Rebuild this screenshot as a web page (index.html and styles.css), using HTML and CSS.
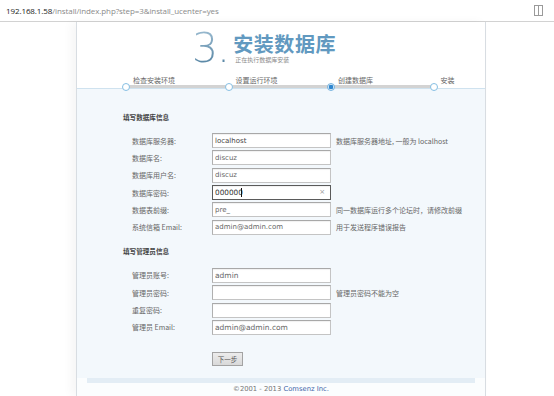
FILE: index.html
```html
<!DOCTYPE html>
<html lang="zh-CN">
<head>
<meta charset="utf-8">
<title>Discuz! 安装向导</title>
<link rel="stylesheet" href="styles.css">
</head>
<body>
<div class="addr">
  <span class="host">192.168.1.58</span><span class="path">/install/index.php?step=3&amp;install_ucenter=yes</span>
  <svg class="reader" width="9" height="11" viewBox="0 0 9 11"><rect x="0.5" y="0.5" width="8" height="10" fill="none" stroke="#9a9a9a"/><line x1="4.5" y1="0.5" x2="4.5" y2="10.5" stroke="#9a9a9a"/></svg>
</div>
<div class="page">
  <div class="header">
    <div class="hero">
      <span class="num">3.</span>
      <div class="titles">
        <div class="title">安装数据库</div>
        <div class="subtitle">正在执行数据库安装</div>
      </div>
    </div>
    <div class="steps">
      <div class="step"><span class="dot"></span><span class="slabel">检查安装环境</span></div>
      <div class="step"><span class="dot"></span><span class="slabel">设置运行环境</span></div>
      <div class="step"><span class="dot active"></span><span class="slabel">创建数据库</span></div>
      <div class="step last"><span class="dot"></span><span class="slabel">安装</span></div>
    </div>
  </div>
  <div class="main">
    <div class="sect">填写数据库信息</div>
    <div class="rows">
      <label>数据库服务器:</label><input class="txt dark" value="localhost"><span class="hint">数据库服务器地址, 一般为 localhost</span>
      <label>数据库名:</label><input class="txt" value="discuz"><span class="hint"></span>
      <label>数据库用户名:</label><input class="txt" value="discuz"><span class="hint"></span>
      <label>数据库密码:</label><span class="field"><input class="txt focus" value="000000"><span class="caret"></span><span class="clear">×</span></span><span class="hint"></span>
      <label>数据表前缀:</label><input class="txt" value="pre_"><span class="hint">同一数据库运行多个论坛时，请修改前缀</span>
      <label>系统信箱 Email:</label><input class="txt" value="admin@admin.com"><span class="hint">用于发送程序错误报告</span>
    </div>
    <div class="sect sect2">填写管理员信息</div>
    <div class="rows rows2">
      <label>管理员账号:</label><input class="txt" value="admin"><span class="hint"></span>
      <label>管理员密码:</label><input class="txt" value=""><span class="hint">管理员密码不能为空</span>
      <label>重复密码:</label><input class="txt" value=""><span class="hint"></span>
      <label>管理员 Email:</label><input class="txt" value="admin@admin.com"><span class="hint"></span>
    </div>
    <div class="actions"><button class="btn">下一步</button></div>
  </div>
  <div class="footer">
    <div class="band"></div>
    <div class="copy">©2001 - 2013 <span class="co">Comsenz Inc.</span></div>
  </div>
</div>
</body>
</html>
```
FILE: styles.css
```css
html, body {
  margin: 0;
  padding: 0;
  background: #fff;
  overflow: hidden;
  height: 396px;
}
body {
  font-family: "Noto Sans CJK SC", sans-serif;
  color: #555;
}
.addr {
  height: 21px;
  border-bottom: 1px solid #d2d2d2;
  display: flex;
  align-items: center;
  padding: 0 0 0 6px;
  font-family: "Open Sans", sans-serif;
  font-size: 8px;
  letter-spacing: -0.1px;
}
.addr .host { color: #222; }
.addr .path { color: #8a8a8a; }
.addr .reader { margin-left: auto; margin-right: 11px; }

.page {
  width: 408px;
  margin-left: 76px;
  border-left: 1px solid #d8dde2;
  border-right: 1px solid #d8dde2;
  box-shadow: -5px 0 9px rgba(0, 0, 0, 0.04);
  height: 374px;
  display: flex;
  flex-direction: column;
}
.header {
  background: #fff;
  border-bottom: 1px solid #cfe2ef;
}
.hero {
  display: flex;
  padding: 6px 0 0 115px;
  height: 41px;
}
.num {
  font-family: "DejaVu Sans", sans-serif;
  font-weight: 200;
  font-size: 41px;
  line-height: 41px;
  background: linear-gradient(#9dbdd2, #4e7e9e);
  -webkit-background-clip: text;
  background-clip: text;
  color: transparent;
  letter-spacing: -1px;
}
.titles {
  margin-left: 4px;
  padding-top: 5px;
}
.title {
  font-size: 20px;
  line-height: 22px;
  font-weight: bold;
  color: #6199c0;
  letter-spacing: 0.6px;
}
.subtitle {
  font-size: 6px;
  line-height: 8px;
  margin-top: 1px;
  margin-left: 2px;
  color: #8a8a8a;
}
.steps {
  position: relative;
  display: flex;
  margin: 7px 0 -3px 45px;
  height: 15px;
}
.steps::before {
  content: "";
  position: absolute;
  left: 4px;
  width: 307px;
  top: 9px;
  height: 3px;
  background: #d3d3d3;
}
.step {
  position: relative;
  display: flex;
  align-items: flex-start;
  width: 102.5px;
  flex: none;
}
.step.last { width: auto; }
.dot {
  width: 6px;
  height: 6px;
  margin-top: 7px;
  border: 1.5px solid #86bfe3;
  border-radius: 50%;
  background: #fff;
  flex: none;
}
.dot.active {
  background: radial-gradient(circle, #2f86cf 0 48%, #d7eaf8 58%);
  border-color: #76b3df;
}
.slabel {
  margin-left: 3px;
  font-size: 7px;
  line-height: 9px;
  color: #666;
}
.main {
  background: #f3f8fc;
  padding: 23px 0 12px 0;
}
.sect {
  margin-left: 46px;
  font-size: 6.6px;
  line-height: 10px;
  font-weight: bold;
  color: #444;
}
.sect2 { margin-top: 10px; }
.rows {
  display: grid;
  grid-template-columns: 80px 119px auto;
  grid-auto-rows: 17.3px;
  align-items: center;
  margin: 10px 0 0 55px;
}
.rows2 { margin-top: 11px; }
.rows label {
  font-size: 7px;
  color: #666;
  white-space: nowrap;
}
.hint {
  font-size: 7px;
  color: #666;
  white-space: nowrap;
  margin-left: 5px;
}
.txt {
  display: block;
  box-sizing: border-box;
  width: 119px;
  height: 15px;
  margin: 0;
  padding: 0 0 0 2px;
  border: 1px solid #c4c4c4;
  border-top-color: #a8a8a8;
  border-left-color: #b0b0b0;
  background: #fff;
  font-family: "DejaVu Sans", sans-serif;
  font-size: 7px;
  color: #666;
  outline: none;
  box-shadow: inset 0 1px 1px rgba(0, 0, 0, 0.06);
}
.txt.dark { color: #444; }
.rows2 .txt { font-size: 7.5px; }
.txt.focus {
  border-color: #5a5a5a;
  color: #333;
  font-size: 7.3px;
}
.field {
  position: relative;
  display: block;
  width: 119px;
  height: 15px;
}
.caret {
  position: absolute;
  left: 29px;
  top: 3px;
  width: 1px;
  height: 9px;
  background: #111;
}
.clear {
  position: absolute;
  right: 6px;
  top: 2px;
  font-family: "DejaVu Sans", sans-serif;
  font-size: 7px;
  line-height: 10px;
  color: #999;
}
.actions {
  display: flex;
  margin: 16px 0 0 135px;
}
.btn {
  box-sizing: border-box;
  width: 31px;
  height: 14px;
  margin: 0;
  padding: 0;
  border: 1px solid #a3a3a3;
  background: linear-gradient(#ececec, #d9d9d9);
  font-family: "Noto Sans CJK SC", sans-serif;
  font-size: 6.5px;
  color: #555;
  line-height: 12px;
}
.footer {
  flex: 1;
  background: #fbfdfe;
}
.band {
  margin: 0 10px;
  height: 5px;
  background: #e3edf5;
}
.copy {
  text-align: center;
  font-family: "DejaVu Sans", sans-serif;
  font-size: 6.8px;
  line-height: 10px;
  margin-top: 1px;
  color: #777;
}
.co { color: #3d64a8; }
```
